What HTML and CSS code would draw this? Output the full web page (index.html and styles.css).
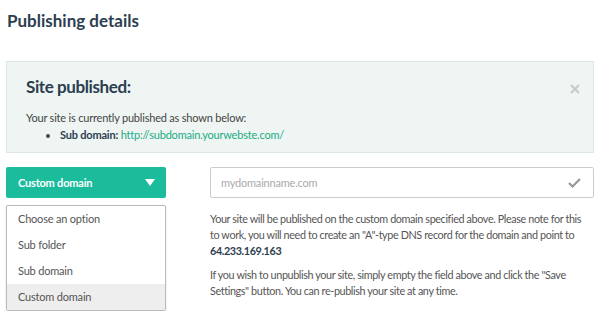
FILE: index.html
```html
<!DOCTYPE html>
<html>
<head>
<meta charset="utf-8">
<link rel="stylesheet" href="styles.css">
</head>
<body>
<div class="page">
  <h1 class="title">Publishing details</h1>
  <div class="alert">
    <div class="alert-body">
      <h2 class="alert-title">Site published:</h2>
      <p class="alert-text">Your site is currently published as shown below:</p>
      <ul class="alert-list">
        <li><b>Sub domain:</b> <a class="link" href="#">http://subdomain.yourwebste.com/</a></li>
      </ul>
    </div>
    <span class="close">
      <svg width="10" height="10" viewBox="0 0 10 10"><path d="M1 1L9 9M9 1L1 9" stroke="#c4cac8" stroke-width="2"/></svg>
    </span>
  </div>
  <div class="row">
    <div class="select-col">
      <div class="select-btn">
        <span>Custom domain</span>
        <svg width="10" height="7" viewBox="0 0 10 7"><path d="M0 0H10L5 7Z" fill="#fff"/></svg>
      </div>
      <ul class="menu">
        <li>Choose an option</li>
        <li>Sub folder</li>
        <li>Sub domain</li>
        <li class="active">Custom domain</li>
      </ul>
    </div>
    <div class="field-col">
      <div class="input">
        <span class="placeholder">mydomainname.com</span>
        <svg width="13" height="10" viewBox="0 0 13 10"><path d="M1 5L4.5 8.5L12 1" stroke="#999" stroke-width="2.2" fill="none"/></svg>
      </div>
      <p class="help">Your site will be published on the custom domain specified above. Please note for this <span class="nw">to work,</span> you will need to create an "A"-type DNS record for the domain and point to <b>64.233.169.163</b></p>
      <p class="help">If you wish to unpublish your site, simply empty the field above and click the "Save Settings" button. You can re-publish your site at any time.</p>
    </div>
  </div>
</div>
</body>
</html>
```
FILE: styles.css
```css
* { box-sizing: border-box; }
body {
  margin: 0;
  background: #fff;
  font-family: Lato, "Open Sans", sans-serif;
  color: #555;
  letter-spacing: -0.2px;
}
.page { padding: 10px 6px 0 6px; }
.title {
  margin: 0 0 0 1px;
  font-size: 17px;
  font-weight: 700;
  color: #2c3e50;
  line-height: 22px;
  letter-spacing: 0;
}
.alert {
  margin-top: 29px;
  display: flex;
  justify-content: space-between;
  background: #eef5f2;
  border: 1px solid #dde8e3;
  padding: 14px 13px 12px 19px;
  height: 92px;
}
.alert-title {
  margin: 0;
  font-size: 17px;
  font-weight: 700;
  color: #2c3e50;
  line-height: 22px;
  letter-spacing: -0.4px;
}
.alert-text {
  margin: 11px 0 0;
  font-size: 11px;
  line-height: 17px;
  color: #444;
}
.alert-list {
  margin: 0;
  padding-left: 34px;
  font-size: 11px;
  line-height: 17px;
  color: #444;
}
.alert-list b { color: #2c3e50; }
.link { color: #1aab86; text-decoration: none; }
.close { padding-top: 2px; }
.row {
  display: flex;
  gap: 44px;
  margin-top: 14px;
}
.select-col { width: 160px; flex: none; }
.select-btn {
  height: 31px;
  background: #1abc9c;
  border-radius: 2px;
  display: flex;
  align-items: center;
  justify-content: space-between;
  padding: 0 11px 0 12px;
  color: #fff;
  font-weight: 700;
  font-size: 11px;
}
.menu {
  list-style: none;
  margin: 7px 0 0;
  padding: 0;
  border: 1px solid #bbb;
  border-radius: 2px;
  box-shadow: 0 1px 2px rgba(0,0,0,0.15);
}
.menu li {
  height: 26px;
  line-height: 26px;
  padding-left: 11px;
  font-size: 11px;
  color: #555;
}
.menu li.active { background: #eeeeee; }
.field-col { flex: 1; }
.input {
  height: 31px;
  border: 1px solid #ccc;
  border-radius: 2px;
  display: flex;
  align-items: center;
  justify-content: space-between;
  padding: 0 12px 0 10px;
}
.placeholder { font-size: 11px; color: #aaa; }
.help {
  margin: 13px 0 0;
  padding-right: 8px;
  font-size: 10.8px;
  line-height: 16px;
  color: #555;
  letter-spacing: -0.38px;
}
.help + .help { margin-top: 8px; }
.help b { color: #2c3e50; }
.nw { white-space: nowrap; }
```
